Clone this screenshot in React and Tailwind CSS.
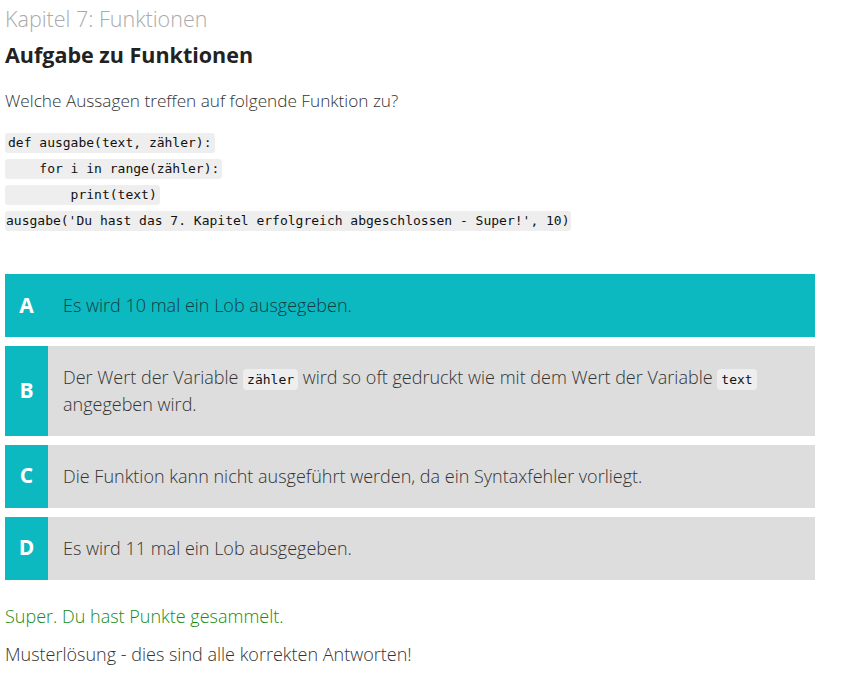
export default function App() {
  const code = "font-['DejaVu_Sans_Mono',monospace] text-[13px] bg-[#eeeeee] rounded-[3px] text-[#111] whitespace-pre";
  const inl = "font-['DejaVu_Sans_Mono',monospace] text-[13px] leading-none bg-[#eeeeee] rounded-[4px] px-[4px] py-[3px] text-[#111]";
  const opts = [
    { l: "A", active: true, t: <>Es wird 10 mal ein Lob ausgegeben.</> },
    { l: "B", t: <>Der Wert der Variable <code className={inl}>zähler</code> wird so oft gedruckt wie mit dem Wert der Variable <code className={inl}>text</code> angegeben wird.</> },
    { l: "C", t: <>Die Funktion kann nicht ausgeführt werden, da ein Syntaxfehler vorliegt.</> },
    { l: "D", t: <>Es wird 11 mal ein Lob ausgegeben.</> },
  ];
  return (
    <div className="bg-white min-h-[675px] w-[853px] pl-[5px] font-['Open_Sans',sans-serif] text-[#333]">
      <div className="text-[21.5px] font-light text-[#aaaaaa] leading-[30px] pt-[4px]">Kapitel 7: Funktionen</div>
      <div className="text-[21.5px] font-bold text-[#222] leading-[30px] mt-[6px]">Aufgabe zu Funktionen</div>
      <div className="text-[17.2px] font-light leading-[24px] mt-[19px]">Welche Aussagen treffen auf folgende Funktion zu?</div>
      <div className="mt-[20px] flex flex-col items-start gap-[6px]">
        <span className={code + " px-[3px] py-[2px] leading-[16px]"}>def ausgabe(text, zähler):</span>
        <span className={code + " px-[3px] py-[2px] leading-[16px]"}>{"    for i in range(zähler):"}</span>
        <span className={code + " px-[3px] py-[2px] leading-[16px]"}>{"        print(text)"}</span>
        <span className={code + " px-[1px] py-[2px] leading-[16px] text-[13.1px]"}>ausgabe('Du hast das 7. Kapitel erfolgreich abgeschlossen - Super!', 10)</span>
      </div>
      <div className="mt-[43px] w-[810px] flex flex-col gap-[9px]">
        {opts.map((o) => (
          <div key={o.l} className={"flex " + (o.active ? "bg-[#0db9c0]" : "bg-[#dddddd]")}>
            <div className="w-[43px] shrink-0 bg-[#0db9c0] flex items-center justify-center text-white font-bold text-[21px]">{o.l}</div>
            <div className={"pl-[15px] pr-[40px] py-[18.25px] text-[18px] font-light leading-[26.5px] " + (o.active ? "text-[#123c44]" : "text-[#333]")}>{o.t}</div>
          </div>
        ))}
      </div>
      <div className="mt-[23px] text-[18px] font-light text-[#178a17] leading-[26px]">Super. Du hast Punkte gesammelt.</div>
      <div className="mt-[12px] text-[18px] font-light text-[#333] leading-[26px]">Musterlösung - dies sind alle korrekten Antworten!</div>
    </div>
  );
}
